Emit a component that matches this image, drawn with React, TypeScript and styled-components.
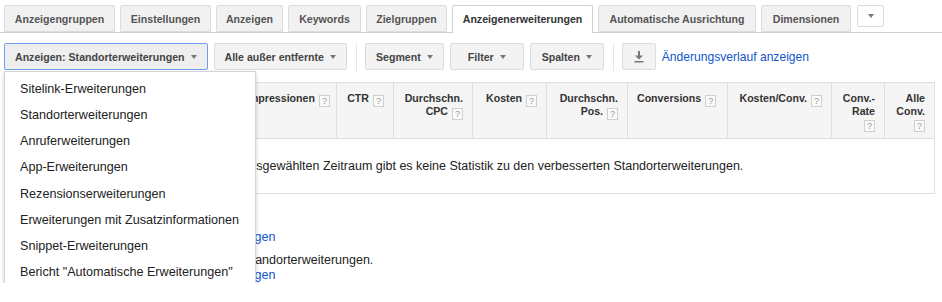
import React from "react";
import styled, { createGlobalStyle } from "styled-components";

const GlobalStyle = createGlobalStyle`
  html, body {
    margin: 0;
    padding: 0;
    background: #fff;
  }
  body {
    font-family: "Liberation Sans", Arial, sans-serif;
    color: #222;
  }
`;

const tabs = [
  { label: "Anzeigengruppen", w: 111 },
  { label: "Einstellungen", w: 91 },
  { label: "Anzeigen", w: 67 },
  { label: "Keywords", w: 73 },
  { label: "Zielgruppen", w: 81 },
  { label: "Anzeigenerweiterungen", w: 141, active: true },
  { label: "Automatische Ausrichtung", w: 158 },
  { label: "Dimensionen", w: 90 },
];

const menuItems = [
  "Sitelink-Erweiterungen",
  "Standorterweiterungen",
  "Anruferweiterungen",
  "App-Erweiterungen",
  "Rezensionserweiterungen",
  "Erweiterungen mit Zusatzinformationen",
  "Snippet-Erweiterungen",
  'Bericht "Automatische Erweiterungen"',
];

type Col = { w: number; lines: string[]; helpOwnLine?: boolean; pr?: number };

const cols: Col[] = [
  { w: 162, lines: ["Erweiterung"] },
  { w: 70, lines: ["Klicks"] },
  { w: 100, lines: ["Impressionen"], pr: 12 },
  { w: 57, lines: ["CTR"] },
  { w: 79, lines: ["Durchschn.", "CPC"] },
  { w: 74, lines: ["Kosten"] },
  { w: 81, lines: ["Durchschn.", "Pos."] },
  { w: 100, lines: ["Conversions"], pr: 17 },
  { w: 104, lines: ["Kosten/Conv."] },
  { w: 53, lines: ["Conv.-", "Rate"], helpOwnLine: true },
  { w: 50, lines: ["Alle", "Conv."], helpOwnLine: true },
];

const Page = styled.div`
  width: 942px;
  padding-top: 5px;
`;

const TabBar = styled.div`
  display: flex;
  align-items: flex-end;
  gap: 5px;
  padding-left: 4px;
  height: 27px;
  border-bottom: 1px solid #cfcfcf;
`;

const Tab = styled.div<{ $w: number; $active?: boolean }>`
  box-sizing: border-box;
  width: ${(p) => p.$w}px;
  height: ${(p) => (p.$active ? 28 : 27)}px;
  margin-bottom: ${(p) => (p.$active ? -1 : 0)}px;
  display: flex;
  align-items: center;
  justify-content: center;
  padding-bottom: ${(p) => (p.$active ? 1 : 0)}px;
  background: ${(p) => (p.$active ? "#fff" : "#f1f1f1")};
  border: 1px solid ${(p) => (p.$active ? "#d2d2d2" : "#dcdcdc")};
  border-bottom: ${(p) => (p.$active ? "none" : "1px solid #dcdcdc")};
  border-radius: 2px 2px 0 0;
  font-size: 10.6px;
  font-weight: bold;
  color: ${(p) => (p.$active ? "#333" : "#555")};
  white-space: nowrap;
`;

const TabMore = styled.div`
  box-sizing: border-box;
  align-self: flex-start;
  margin-left: 1px;
  width: 27px;
  height: 22px;
  display: flex;
  align-items: center;
  justify-content: center;
  background: #fff;
  border: 1px solid #dcdcdc;
  border-radius: 2px;
`;

const Caret = styled.span`
  display: inline-block;
  width: 0;
  height: 0;
  border-left: 3.5px solid transparent;
  border-right: 3.5px solid transparent;
  border-top: 4px solid #777;
`;

const Toolbar = styled.div`
  display: flex;
  align-items: center;
  gap: 6px;
  padding-left: 4px;
  margin-top: 10px;
  height: 27px;
`;

const ButtonWrap = styled.div`
  position: relative;
`;

const Button = styled.div<{ $focus?: boolean }>`
  box-sizing: border-box;
  min-width: 74px;
  height: 27px;
  padding: 0 10px;
  display: flex;
  align-items: center;
  justify-content: center;
  gap: 6px;
  background: ${(p) => (p.$focus ? "#eee" : "#f3f3f3")};
  border: 1px solid ${(p) => (p.$focus ? "#6e9ef5" : "#dcdcdc")};
  border-radius: 2px;
  font-size: 10.6px;
  font-weight: bold;
  color: #444;
  white-space: nowrap;
`;

const IconButton = styled(Button)`
  min-width: 34px;
  width: 34px;
  padding: 0;
`;

const Divider = styled.div`
  width: 1px;
  height: 28px;
  margin: 0 2px 0 3px;
  background: #e6e6e6;
`;

const HistoryLink = styled.a`
  font-size: 12.1px;
  color: #1155cc;
  text-decoration: none;
  white-space: nowrap;
`;

const Menu = styled.div`
  position: absolute;
  top: 28px;
  left: 0;
  z-index: 10;
  box-sizing: border-box;
  width: 252px;
  padding: 4px 0 1px;
  background: #fff;
  border: 1px solid #d4d4d4;
  box-shadow: 0 2px 4px rgba(0, 0, 0, 0.2);
`;

const MenuItem = styled.div`
  height: 26.15px;
  line-height: 26.15px;
  padding-left: 15px;
  font-size: 12.6px;
  color: #222;
  white-space: nowrap;
`;

const Table = styled.table`
  margin: 12px 0 0 4px;
  width: 930px;
  table-layout: fixed;
  border-collapse: collapse;
`;

const HeadCell = styled.th<{ $pr: number }>`
  height: 56px;
  box-sizing: border-box;
  padding: 9px ${(p) => p.$pr}px 0 9px;
  vertical-align: top;
  text-align: right;
  background: #f5f5f5;
  border: 1px solid #dedede;
  font-size: 10.6px;
  line-height: 12.5px;
  font-weight: bold;
  color: #333;
  white-space: nowrap;
`;

const Help = styled.span<{ $block?: boolean }>`
  display: inline-block;
  box-sizing: border-box;
  width: 11px;
  height: 12px;
  margin-left: ${(p) => (p.$block ? 0 : 4)}px;
  margin-top: ${(p) => (p.$block ? 3 : 0)}px;
  vertical-align: -2px;
  border: 1px solid #cfcfcf;
  background: #fafafa;
  font-size: 9px;
  line-height: 10px;
  font-weight: normal;
  text-align: center;
  color: #999;
`;

const EmptyCell = styled.td`
  height: 55px;
  box-sizing: border-box;
  padding: 0 0 0 220px;
  border: 1px solid #dedede;
  border-top: none;
  font-size: 12.5px;
  color: #222;
  white-space: nowrap;
`;

const Notes = styled.div`
  margin-top: 36px;
  padding-left: 144px;
  font-size: 12.5px;
  line-height: 15px;
  color: #222;
`;

const NoteLink = styled.a<{ $gap?: number }>`
  display: block;
  margin-bottom: ${(p) => p.$gap ?? 0}px;
  color: #1155cc;
  text-decoration: none;
`;

const NoteText = styled.div``;

function DownloadIcon() {
  return (
    <svg width="10" height="12" viewBox="0 0 10 12">
      <rect x="4" y="0" width="2" height="5" fill="#777" />
      <polygon points="1,4.5 9,4.5 5,8.5" fill="#777" />
      <rect x="0.5" y="10" width="9" height="1.5" fill="#777" />
    </svg>
  );
}

export default function App() {
  return (
    <Page>
      <GlobalStyle />
      <TabBar>
        {tabs.map((t) => (
          <Tab key={t.label} $w={t.w} $active={t.active}>
            {t.label}
          </Tab>
        ))}
        <TabMore>
          <Caret />
        </TabMore>
      </TabBar>

      <Toolbar>
        <ButtonWrap>
          <Button $focus>
            Anzeigen: Standorterweiterungen <Caret />
          </Button>
          <Menu>
            {menuItems.map((m) => (
              <MenuItem key={m}>{m}</MenuItem>
            ))}
          </Menu>
        </ButtonWrap>
        <Button>
          Alle außer entfernte <Caret />
        </Button>
        <Divider />
        <Button>
          Segment <Caret />
        </Button>
        <Button>
          Filter <Caret />
        </Button>
        <Button>
          Spalten <Caret />
        </Button>
        <Divider />
        <IconButton>
          <DownloadIcon />
        </IconButton>
        <HistoryLink href="#">Änderungsverlauf anzeigen</HistoryLink>
      </Toolbar>

      <Table>
        <colgroup>
          {cols.map((c, i) => (
            <col key={i} style={{ width: c.w }} />
          ))}
        </colgroup>
        <thead>
          <tr>
            {cols.map((c, i) => (
              <HeadCell key={i} $pr={c.pr ?? 9}>
                {c.lines.map((l, j) => (
                  <React.Fragment key={j}>
                    {l}
                    {j === c.lines.length - 1 && !c.helpOwnLine && <Help>?</Help>}
                    {j < c.lines.length - 1 && <br />}
                  </React.Fragment>
                ))}
                {c.helpOwnLine && (
                  <>
                    <br />
                    <Help $block>?</Help>
                  </>
                )}
              </HeadCell>
            ))}
          </tr>
        </thead>
        <tbody>
          <tr>
            <EmptyCell colSpan={cols.length}>
              Im ausgewählten Zeitraum gibt es keine Statistik zu den verbesserten Standorterweiterungen.
            </EmptyCell>
          </tr>
        </tbody>
      </Table>

      <Notes>
        <NoteLink href="#" $gap={8}>
          Erweiterung hinzufügen
        </NoteLink>
        <NoteText>Es gibt hier keine Standorterweiterungen.</NoteText>
        <NoteLink href="#">Erweiterung hinzufügen</NoteLink>
      </Notes>
    </Page>
  );
}
